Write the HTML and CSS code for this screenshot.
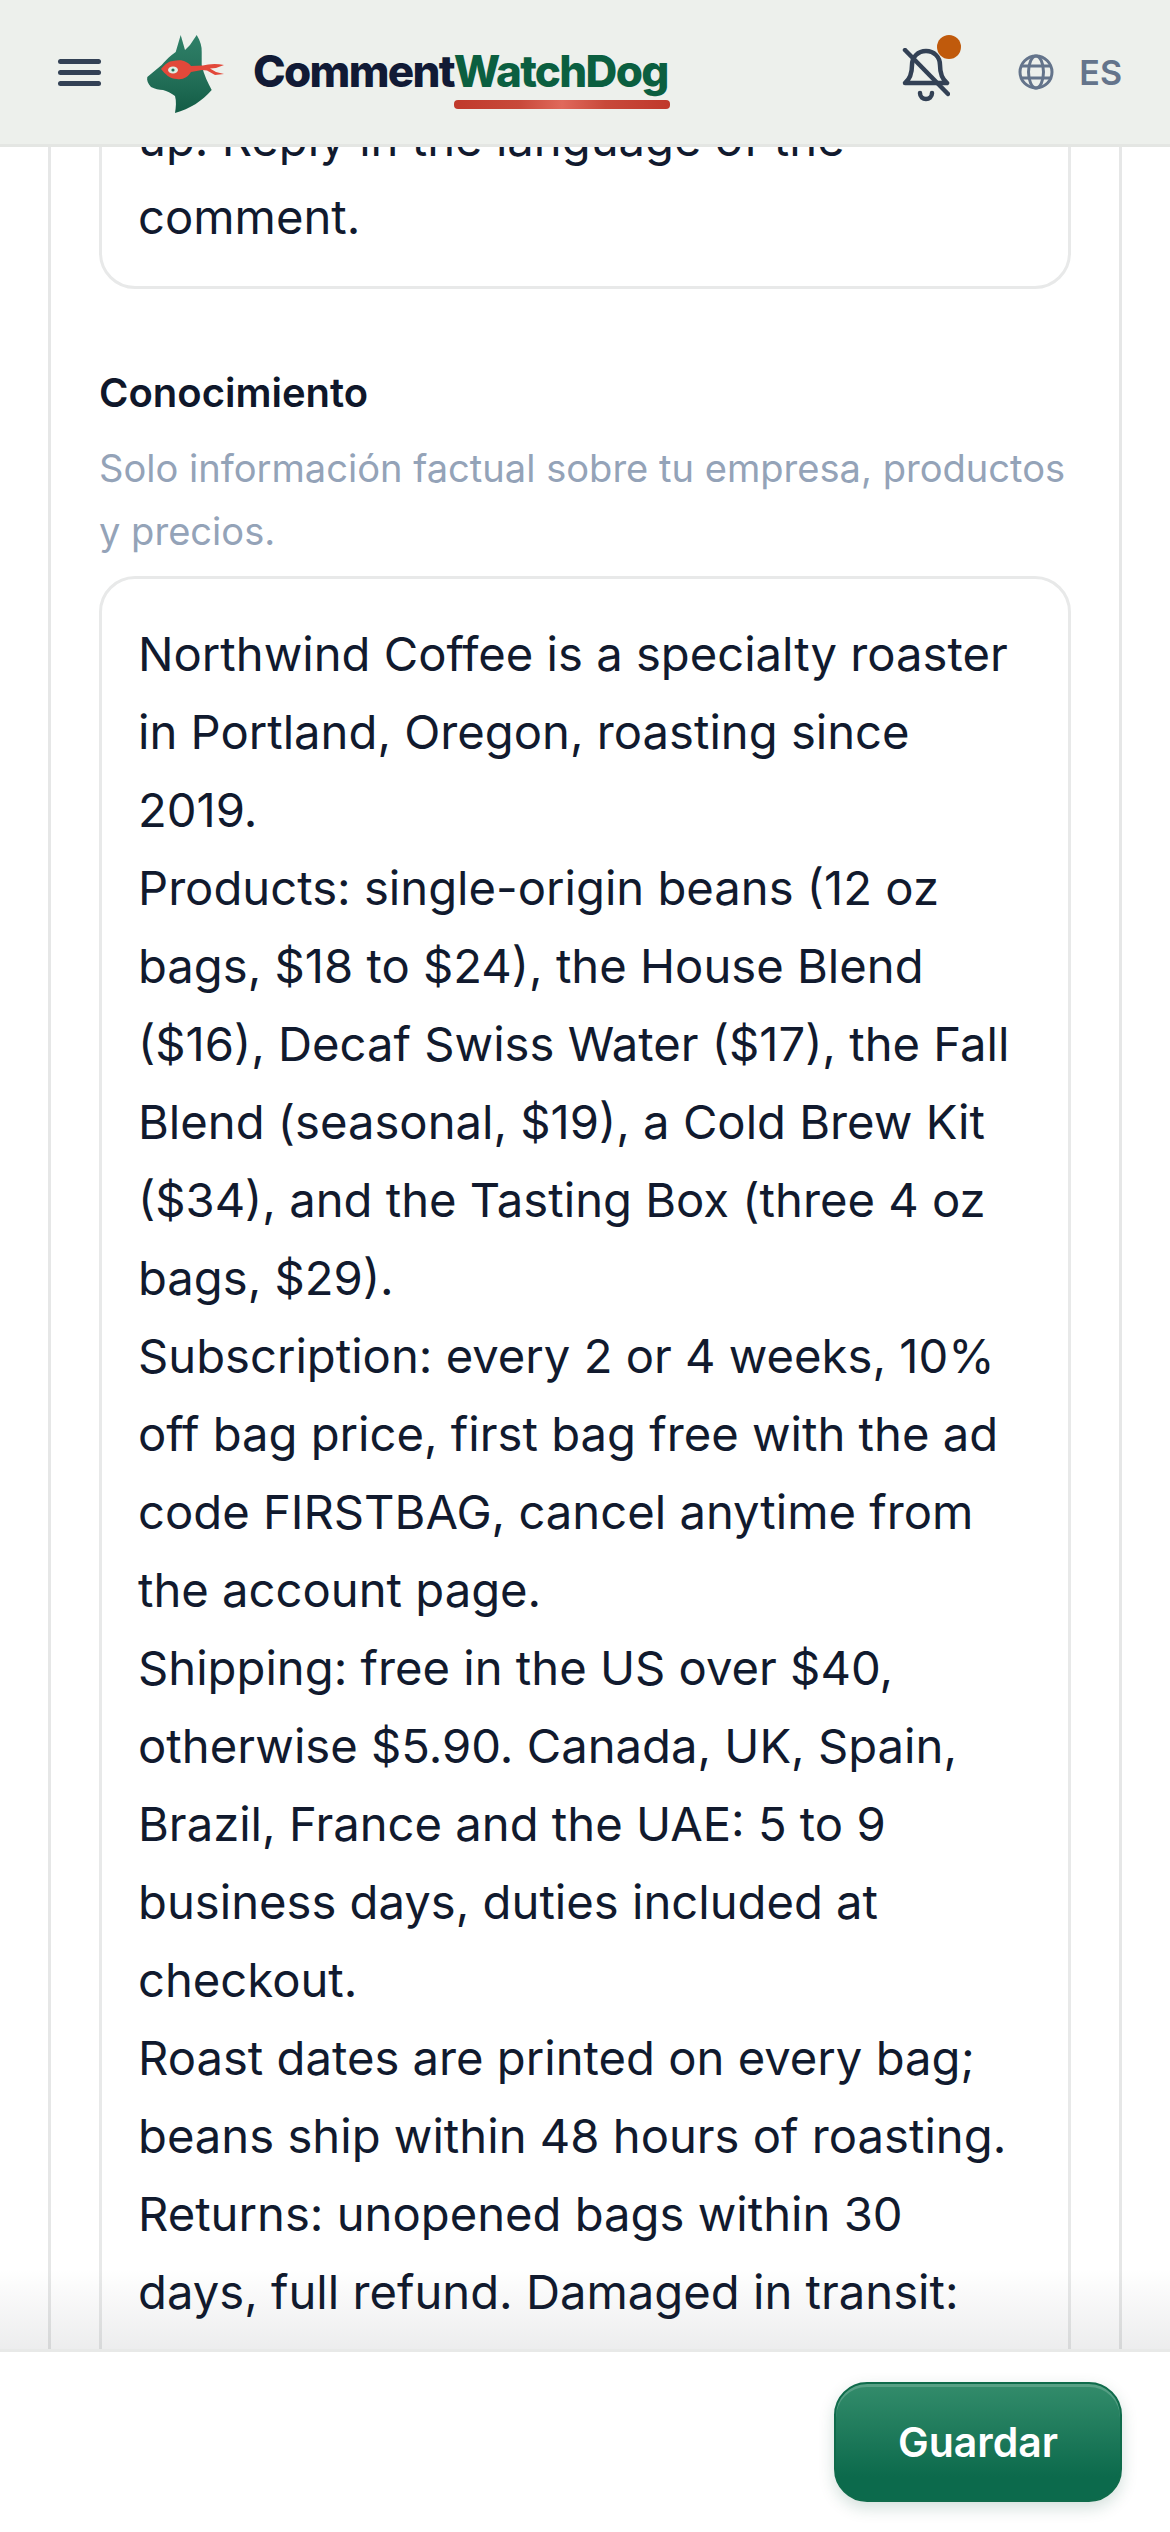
FILE: index.html
```html
<!DOCTYPE html>
<html lang="en">
<head>
    <meta charset="UTF-8">
    <meta name="viewport" content="width=device-width, initial-scale=1.0">
    <title>CommentWatchDog</title>
    <link rel="stylesheet" href="styles.css">
</head>
<body>

<header class="topbar">
    <button class="menu-btn" aria-label="Menu">
        <span></span><span></span><span></span>
    </button>
    <svg class="logo-mark" viewBox="0 0 120 100" width="120" height="100">
        <defs>
            <linearGradient id="dogFill" x1="0.5" y1="0" x2="0.5" y2="1">
                <stop offset="0" stop-color="#2f8068"/>
                <stop offset="0.55" stop-color="#236f58"/>
                <stop offset="1" stop-color="#125c45"/>
            </linearGradient>
        </defs>
        <path fill="url(#dogFill)" d="M50.7 13 L55 28 L60 23 L66.7 13 C70.5 19 72 25 71.7 30 L71.7 43 C74 53 78 61 81.7 68 C72 79 60 87 45 91 C46 85 46.5 79 45 74 C41 71 37 69 33 68 C29 68 25 67 21 65 C18 62 16.5 58 17.3 55 L31.7 43 C35 39 38 36 41.7 33 L45.7 30 Z"/>
        <path fill="#e2483a" d="M31 47 C35 42 39 39 43 39 C48 38 53 38 56 40 C59 41 60 43 61 44 L73 43.5 C78 42 86 41 94 43 L86 46 L80 46.5 L86 50 L94 52 L85 53 L77 48.5 L72 48 L61 50 C58 55 53 58 47 57 C40 57 35 52 31 47 Z"/>
        <ellipse cx="43" cy="48" rx="5" ry="3.5" fill="#dfeee6"/>
        <circle cx="43" cy="48" r="1.6" fill="#236f58"/>
    </svg>
    <div class="wordmark">Comment<span class="wordmark-accent">WatchDog</span></div>

    <div class="topbar-right">
        <button class="bell-btn" aria-label="Notificaciones">
            <svg viewBox="0 0 48 54" width="48" height="54" fill="none" stroke="#334155" stroke-width="4.5" stroke-linecap="round" stroke-linejoin="round">
                <path d="M3 35 C8 31 10 26 10 17 C10 9 16 3 24 3 C32 3 38 9 38 17 C38 26 40 31 45 35 Z"/>
                <path d="M3 2 L46 46"/>
                <path d="M18 45 C18 53 30 53 30 45"/>
            </svg>
            <span class="bell-dot"></span>
        </button>
        <div class="lang">
            <svg viewBox="0 0 36 36" width="36" height="36" fill="none" stroke="#64748b" stroke-width="3">
                <circle cx="18" cy="18" r="16"/>
                <ellipse cx="18" cy="18" rx="7.5" ry="16"/>
                <path d="M3.5 12 H32.5 M3.5 24 H32.5"/>
            </svg>
            <span>ES</span>
        </div>
    </div>
</header>

<main class="content">
    <section class="card">
        <div class="field-box field-box-first">up. Reply in the language of the comment.</div>

        <label class="field-label">Conocimiento</label>
        <p class="field-hint">Solo información factual sobre tu empresa, productos y precios.</p>
        <div class="field-box field-box-long">Northwind Coffee is a specialty roaster in Portland, Oregon, roasting since 2019.
Products: single-origin beans (12 oz bags, $18 to $24), the House Blend ($16), Decaf Swiss Water ($17), the Fall Blend (seasonal, $19), a Cold Brew Kit ($34), and the Tasting Box (three 4 oz bags, $29).
Subscription: every 2 or 4 weeks, 10% off bag price, first bag free with the ad code FIRSTBAG, cancel anytime from the account page.
Shipping: free in the US over $40, otherwise $5.90. Canada, UK, Spain, Brazil, France and the UAE: 5 to 9 business days, duties included at checkout.
Roast dates are printed on every bag; beans ship within 48 hours of roasting.
Returns: unopened bags within 30 days, full refund. Damaged in transit:</div>
    </section>
</main>

<footer class="savebar">
    <button class="save-btn">Guardar</button>
</footer>

</body>
</html>
```

FILE: styles.css
```css
* {
    box-sizing: border-box;
}

html, body {
    margin: 0;
    height: 100%;
}

body {
    display: flex;
    flex-direction: column;
    height: 2532px;
    overflow: hidden;
    font-family: Inter, "Noto Sans", sans-serif;
    background-color: #fff;
    color: #111a2e;
}

button {
    border: none;
    background: none;
    padding: 0;
    font-family: inherit;
}

/* top bar */
.topbar {
    display: flex;
    align-items: center;
    flex: none;
    height: 147px;
    padding: 0 48px 0 58px;
    background-color: #edf0ec;
    border-bottom: 3px solid #e4e6e3;
    position: relative;
    z-index: 2;
}

.menu-btn {
    display: flex;
    flex-direction: column;
    gap: 6px;
    width: 43px;
}

.menu-btn span {
    display: block;
    height: 5px;
    border-radius: 3px;
    background-color: #334155;
}

.logo-mark {
    flex: none;
    margin: 0 3px 0 29px;
}

.wordmark {
    font-size: 44px;
    font-weight: 800;
    letter-spacing: -1.7px;
    color: #111a35;
    margin-bottom: 2px;
}

.wordmark-accent {
    position: relative;
    color: #0b5f40;
}

.wordmark-accent::after {
    content: "";
    position: absolute;
    left: 0;
    right: -2px;
    bottom: -11px;
    height: 9px;
    border-radius: 4px;
    background: linear-gradient(90deg, #c0392b, #c8493a 30%, #e0695b 50%, #c8493a 70%, #c0392b);
}

.topbar-right {
    display: flex;
    align-items: center;
    margin-left: auto;
}

.bell-btn {
    position: relative;
    width: 48px;
    height: 54px;
    margin-top: 6px;
}

.bell-dot {
    position: absolute;
    top: -13px;
    right: -11px;
    width: 24px;
    height: 24px;
    border-radius: 50%;
    background-color: #c05a0c;
}

.lang {
    display: flex;
    align-items: center;
    gap: 25px;
    margin-left: 68px;
    font-size: 34px;
    font-weight: 600;
    color: #64748b;
}

.lang svg {
    display: block;
}

/* scrolled form */
.content {
    flex: 1;
    overflow: hidden;
    padding: 0 48px;
}

.card {
    margin-top: -86px;
    padding: 0 48px;
    border-left: 3px solid #e6e7e7;
    border-right: 3px solid #e6e7e7;
}

.field-box {
    padding: 36px 58px 30px 36px;
    border: 3px solid #e8e9e9;
    border-radius: 36px;
    font-size: 47.2px;
    line-height: 78px;
    white-space: pre-line;
    color: #111a2e;
}

.field-box-first {
    margin-bottom: 82px;
}

.field-box-long {
    padding-bottom: 140px;
}

.field-label {
    display: block;
    font-size: 40px;
    line-height: 44px;
    font-weight: 600;
    color: #0f172a;
}

.field-hint {
    margin: 22px 0 13px;
    font-size: 38.1px;
    line-height: 63px;
    color: #94a3b8;
}

/* save bar */
.savebar {
    display: flex;
    justify-content: flex-end;
    align-items: flex-start;
    flex: none;
    height: 183px;
    padding: 30px 48px 0 0;
    background-color: #fff;
    border-top: 3px solid #e8e9e8;
    position: relative;
    z-index: 2;
}

.savebar::before {
    content: "";
    position: absolute;
    left: 0;
    right: 0;
    top: -83px;
    height: 80px;
    background: linear-gradient(rgba(20, 25, 35, 0), rgba(20, 25, 35, 0.08));
}

.save-btn {
    width: 288px;
    height: 120px;
    border: 2px solid #0f6b4b;
    border-radius: 33px;
    background: linear-gradient(#338c6b, #0c6a4c 80%);
    box-shadow: inset 0 3px 0 rgba(255, 255, 255, 0.18), 0 6px 16px rgba(12, 80, 58, 0.18);
    color: #fff;
    font-size: 41px;
    font-weight: 600;
}
```
